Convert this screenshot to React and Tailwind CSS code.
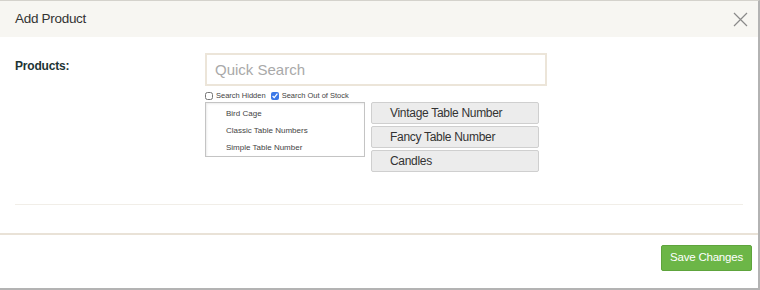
import { useState } from 'react';

const listItems = ['Bird Cage', 'Classic Table Numbers', 'Simple Table Number'];
const picked = ['Vintage Table Number', 'Fancy Table Number', 'Candles'];

export default function App() {
    const [hidden, setHidden] = useState(false);
    const [outOfStock, setOutOfStock] = useState(true);

    return (
        <div className="w-[760px] h-[290px] bg-white flex flex-col border-t border-r-2 border-b-2 border-t-[#d4d2cc] border-r-[#b3b3b3] border-b-[#b3b3b3] font-['Liberation_Sans',Arial,sans-serif]">
            {/* Header */}
            <div className="h-[36px] bg-[#f7f6f2] flex items-center justify-between pl-[15px] pr-[10px] shrink-0">
                <span className="text-[13.5px] tracking-[-0.3px] text-[#333]">Add Product</span>
                <button className="w-[16px] h-[16px] flex items-center justify-center">
                    <svg width="15" height="15" viewBox="0 0 15 15" fill="none" stroke="#8a8a8a" strokeWidth="1.2">
                        <path d="M1 1 L14 14 M14 1 L1 14" />
                    </svg>
                </button>
            </div>

            {/* Body */}
            <div className="flex-1 px-[15px] pt-[16px]">
                <div className="flex">
                    <div className="w-[190px] pt-[4px] text-[12px] font-bold tracking-[-0.2px] text-[#1d3434]">Products:</div>
                    <div className="flex flex-col">
                        <input
                            type="text"
                            placeholder="Quick Search"
                            className="w-[342px] h-[33px] border-2 border-[#ece5d9] px-[8px] text-[15px] placeholder-[#a9a9a9] outline-none"
                        />
                        <div className="flex items-center gap-[3px] mt-[5px] text-[7.5px] text-[#444] h-[10px]">
                            <input type="checkbox" checked={hidden} onChange={() => setHidden(!hidden)} className="w-[8px] h-[8px] m-0" />
                            <span className="mr-[2px]">Search Hidden</span>
                            <input type="checkbox" checked={outOfStock} onChange={() => setOutOfStock(!outOfStock)} className="w-[8px] h-[8px] m-0 accent-[#3b78e7]" />
                            <span>Search Out of Stock</span>
                        </div>
                        <div className="flex gap-[6px] mt-[1px]">
                            <div className="w-[160px] h-[55px] border border-[#c4c4c4] shadow-[inset_1px_1px_2px_rgba(0,0,0,0.08)] pt-[2px]">
                                {listItems.map(item => (
                                    <div key={item} className="pl-[20px] h-[17px] leading-[17px] text-[8px] text-[#444]">{item}</div>
                                ))}
                            </div>
                            <div className="flex flex-col gap-[2px]">
                                {picked.map(p => (
                                    <div key={p} className="w-[168px] h-[22px] bg-[#ececec] border border-[#cfcfcf] rounded-[2px] pl-[18px] flex items-center text-[12px] tracking-[-0.3px] text-[#333]">{p}</div>
                                ))}
                            </div>
                        </div>
                    </div>
                </div>
                <div className="mt-[32px] border-t border-[#f1eee8]" />
            </div>

            {/* Footer */}
            <div className="border-t-2 border-[#e9e2d7] flex justify-end pt-[10px] pb-[17px] pr-[6px] shrink-0">
                <button className="w-[91px] h-[26px] bg-[#6cb647] border border-[#5ea43c] rounded-[2px] text-white text-[11.5px] tracking-[-0.2px]">Save Changes</button>
            </div>
        </div>
    );
}
